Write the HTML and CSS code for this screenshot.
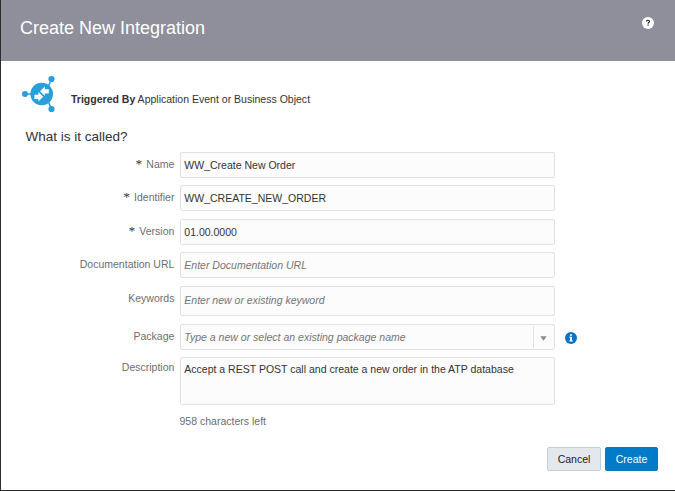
FILE: index.html
```html
<!DOCTYPE html>
<html lang="en">
<head>
<meta charset="utf-8">
<title>Create New Integration</title>
<link rel="stylesheet" href="styles.css">
</head>
<body>
<main class="dialog">
  <header class="header">
    <h1 class="title">Create New Integration</h1>
    <svg class="help" viewBox="0 0 12 12"><circle cx="6" cy="6" r="6" fill="#fff"/><path d="M4.5 4.6V4.2Q4.5 3.3 6 3.3T7.5 4.3Q7.5 5 6.7 5.5 6.1 5.9 6.1 6.7" fill="none" stroke="#222" stroke-width="1.1"/><rect x="5.5" y="7.5" width="1.2" height="1.2" fill="#222"/></svg>
  </header>
  <section class="trigger">
    <svg class="logo" viewBox="0 0 36 38">
      <g fill="#289edb" stroke="#289edb">
        <path d="M3 19H12M26 12L29.5 4M26 26L29.5 34" fill="none" stroke-width="1.5"/>
        <circle cx="19.7" cy="19" r="11.3" stroke="none"/>
        <circle cx="3" cy="19" r="3" stroke="none"/>
        <circle cx="29.5" cy="4" r="3.1" stroke="none"/>
        <circle cx="29.5" cy="34" r="3.1" stroke="none"/>
      </g>
      <path d="M18 16.3L22.8 11.6V14.2H26.8V18.4H22.8V21ZM21.2 21.8L16.4 17.1V19.7H12.4V23.9H16.4V26.5Z" fill="#fff"/>
    </svg>
    <p class="trigger-text"><b>Triggered By</b> Application Event or Business Object</p>
  </section>
  <h2 class="question">What is it called?</h2>
  <form class="form">
    <div class="row"><label class="label" for="name"><span class="star">*</span>Name</label><input class="field" id="name" value="WW_Create New Order"></div>
    <div class="row wide-gap"><label class="label" for="identifier"><span class="star">*</span>Identifier</label><input class="field" id="identifier" value="WW_CREATE_NEW_ORDER"></div>
    <div class="row"><label class="label" for="version"><span class="star">*</span>Version</label><input class="field" id="version" value="01.00.0000"></div>
    <div class="row wide-gap"><label class="label" for="url">Documentation URL</label><input class="field" id="url" placeholder="Enter Documentation URL"></div>
    <div class="row wide-gap"><label class="label" for="keywords">Keywords</label><input class="field tall" id="keywords" placeholder="Enter new or existing keyword"></div>
    <div class="row"><label class="label" for="package">Package</label>
      <div class="field combo"><input class="combo-input" id="package" placeholder="Type a new or select an existing package name"><span class="arrow"><svg viewBox="0 0 8 5"><path d="M.4 0H7.6L4 5Z" fill="#888"/></svg></span></div>
      <svg class="info" viewBox="0 0 12 12"><circle cx="6" cy="6" r="6" fill="#0a73c7"/><path d="M5 2.2H7V3.8H5ZM4.4 4.7H7V8.3H7.7V9.4H4.4V8.3H5.1V5.8H4.4Z" fill="#fff"/></svg>
    </div>
    <div class="row"><label class="label description-label" for="description">Description</label><textarea class="field area" id="description">Accept a REST POST call and create a new order in the ATP database</textarea></div>
    <p class="remaining">958 characters left</p>
  </form>
  <footer class="actions"><button class="button">Cancel</button><button class="button primary">Create</button></footer>
</main>
</body>
</html>
```
FILE: styles.css
```css
* { box-sizing: border-box; }
body { margin: 0; font: 10.53px/14px "Liberation Sans", Arial, sans-serif; color: #333; background: #fff; }
.dialog { height: 491px; border-left: 1px solid #2c2c2e; border-bottom: 1px solid #2c2c2e; overflow: hidden; }
.header { display: flex; justify-content: space-between; height: 61px; padding: 16px 21px 0 19px; background: #8e8f9b; }
.title { margin: 0; font-size: 18px; line-height: 24px; font-weight: 400; color: #fff; }
.help { width: 12px; height: 12px; margin-top: 1px; }
.trigger { display: flex; height: 61px; padding: 14px 0 0 21px; }
.logo { width: 36px; height: 38px; }
.trigger-text { margin: 17px 0 0 13px; }
.question { margin: 6px 0 0 24.5px; font-size: 13.5px; line-height: 18px; font-weight: 400; }
.form { padding-top: 6px; }
.row { display: flex; align-items: flex-start; margin-bottom: 7px; }
.wide-gap { margin-bottom: 8px; }
.label { width: 173.4px; margin: 5px 5.6px 0 0; text-align: right; color: #6e6e6e; }
.star { margin-right: 4px; color: #333; font-family: "Liberation Serif", serif; font-size: 13.5px; line-height: 10px; }
.field { width: 375px; height: 26px; margin: 0; padding: 0 3.3px; border: 1px solid #dfe1e3; border-radius: 2px; background: #fcfcfc; color: #333; font: inherit; outline: 0; }
::placeholder { color: #757575; font-style: italic; opacity: 1; }
.tall { height: 30px; padding-bottom: 2px; }
.combo { display: flex; padding: 0; }
.combo-input { flex: 1; min-width: 0; padding: 0 3.3px; border: 0; background: none; font: inherit; }
.arrow { display: flex; align-items: center; justify-content: center; width: 21px; margin: 1px 0; border-left: 1px solid #dfe1e3; }
.arrow svg { width: 7px; height: 5px; margin: 3px 1px 0 0; }
.info { width: 12px; height: 12px; margin: 8px 0 0 10px; }
.area { display: block; height: 48px; padding: 4px 3.3px; resize: none; overflow: hidden; }
.description-label { margin-top: 3px; }
.remaining { margin: 9px 0 0 178.5px; color: #6e6e6e; }
.actions { display: flex; justify-content: flex-end; gap: 4px; margin: 19px 17px 0 0; }
.button { width: 54px; height: 24px; padding: 0; border: 1px solid #c4ced7; border-radius: 2px; background: #e4e8ec; color: #222; font: inherit; }
.primary { width: 53px; border-color: #007bc8; background: #007bc8; color: #fff; }
```
